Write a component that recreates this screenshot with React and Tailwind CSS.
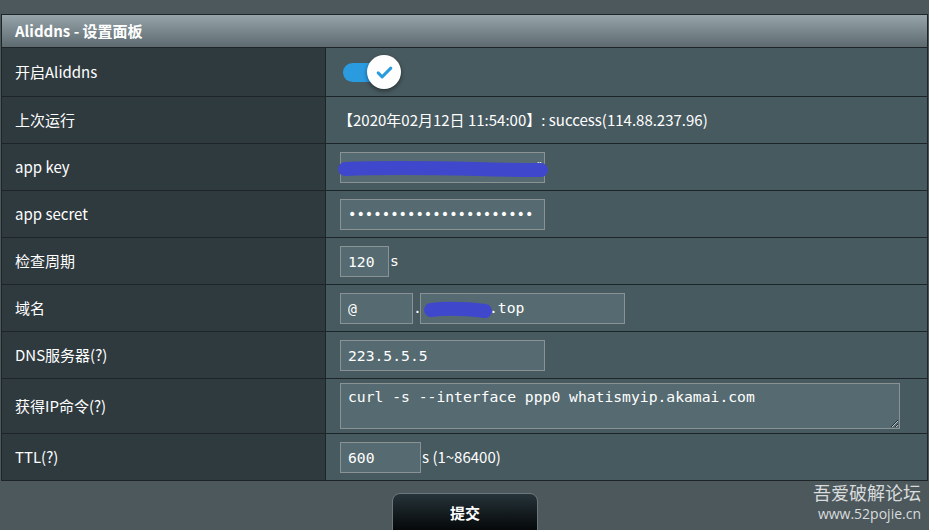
import { useState } from 'react';

const labelFont = { fontFamily: '"Noto Sans CJK SC", "Noto Sans", sans-serif' };
const monoFont = { fontFamily: '"DejaVu Sans Mono", "Liberation Mono", monospace' };

function Row({ label, height, children }) {
  return (
    <div className={`flex border-t border-[#1e2528] ${height}`}>
      <div className="w-[324px] shrink-0 flex items-center pl-[13px] bg-[#2f3a3f] text-white text-[15px] border-r border-[#1e2528]">
        {label}
      </div>
      <div className="flex-1 flex items-center pl-[14px] bg-[#475a5f] text-white text-[15px]">
        {children}
      </div>
    </div>
  );
}

function Field({ width, value, type = 'text', size = 'text-[14.7px]', children }) {
  return (
    <div className={`relative h-[31px] ${width} border border-[#8a9294] bg-[#566b71] flex items-center`}>
      <input
        type={type}
        defaultValue={value}
        style={monoFont}
        className={`w-full h-full bg-transparent px-[7px] text-white ${size} outline-none`}
      />
      {children}
    </div>
  );
}

function Scribble({ className, width, d }) {
  return (
    <svg className={`absolute pointer-events-none ${className}`} width={width} height="24" viewBox={`0 0 ${width} 24`}>
      <path d={d} stroke="#3f48cc" strokeWidth="14" strokeLinecap="round" strokeLinejoin="round" fill="none" />
    </svg>
  );
}

export default function App() {
  const [enabled, setEnabled] = useState(true);

  return (
    <div className="min-h-screen w-[929px] h-[530px] overflow-hidden bg-[#4d585c] pt-[14px] pl-[1px]" style={labelFont}>
      <div className="w-[927px] border border-[#1e2528]">
        {/* Header */}
        <div className="h-[32px] flex items-center pl-[13px] bg-gradient-to-b from-[#97a4a9] to-[#5d6b71] text-white text-[15px] font-bold">
          Aliddns - 设置面板
        </div>

        <Row label="开启Aliddns" height="h-[49px]">
          <button onClick={() => setEnabled(!enabled)} className="relative w-[62px] h-[38px] flex items-center">
            <span className="absolute left-[3px] w-[38px] h-[19px] rounded-full bg-[#2b9be0]" />
            <span className="absolute left-[27px] w-[34px] h-[34px] rounded-full bg-white shadow-[0_2px_4px_rgba(0,0,0,0.45)] flex items-center justify-center">
              {enabled && (
                <svg width="19" height="19" viewBox="0 0 24 24">
                  <path d="M4 12.5l5 5L20 6.5" stroke="#2b9be0" strokeWidth="3.8" fill="none" strokeLinecap="round" strokeLinejoin="round" />
                </svg>
              )}
            </span>
          </button>
        </Row>

        <Row label="上次运行" height="h-[47px]">
          <span className="-ml-[2px]">【2020年02月12日 11:54:00】: success(114.88.237.96)</span>
        </Row>

        <Row label="app key" height="h-[47px]">
          <Field width="w-[205px]" value="">
            <span style={monoFont} className="absolute right-[1px] top-[5px] text-white text-[12px]">"</span>
            <Scribble className="left-[-4px] top-[4px]" width={212} d="M8 12 C50 10 100 11 140 12 C170 13 190 13 204 13" />
          </Field>
        </Row>

        <Row label="app secret" height="h-[47px]">
          <Field width="w-[205px]" type="password" size="text-[14px]" value="xxxxxxxxxxxxxxxxxxxxxx" />
        </Row>

        <Row label="检查周期" height="h-[47px]">
          <Field width="w-[49px]" value="120" />
          <span style={monoFont} className="ml-[1px] text-[14.7px]">s</span>
        </Row>

        <Row label="域名" height="h-[47px]">
          <Field width="w-[73px]" value="@" />
          <span style={monoFont} className="w-[7px] text-[14.7px] text-center">.</span>
          <div className="relative h-[31px] w-[205px] border border-[#8a9294] bg-[#566b71] flex items-center">
            <span style={monoFont} className="pl-[68px] text-white text-[14.7px]">.top</span>
            <Scribble className="left-[2px] top-[4px]" width={70} d="M8 12 C25 10 45 11 62 13" />
          </div>
        </Row>

        <Row label="DNS服务器(?)" height="h-[47px]">
          <Field width="w-[205px]" value="223.5.5.5" />
        </Row>

        <Row label="获得IP命令(?)" height="h-[55px]">
          <textarea
            defaultValue="curl -s --interface ppp0 whatismyip.akamai.com"
            style={monoFont}
            className="w-[560px] h-[46px] border border-[#8a9294] bg-[#566b71] text-white text-[14.7px] px-[7px] py-[3px] outline-none leading-[20px]"
          />
        </Row>

        <Row label="TTL(?)" height="h-[47px]">
          <Field width="w-[81px]" value="600" />
          <span className="ml-[1px]">s (1~86400)</span>
        </Row>
      </div>

      <div className="relative flex justify-center pt-[12px]">
        <button className="w-[146px] h-[40px] rounded-t-[8px] border border-[#6b777c] bg-gradient-to-b from-[#26343a] to-[#050708] text-white text-[15px] font-bold">
          提交
        </button>
        <div className="absolute right-[8px] top-[-1px] flex flex-col items-end text-[#d8dcdd]">
          <span className="text-[18px] leading-[25px]">吾爱破解论坛</span>
          <span className="text-[14px] leading-[18px]" style={{ fontFamily: '"Open Sans", sans-serif' }}>www.52pojie.cn</span>
        </div>
      </div>
    </div>
  );
}
